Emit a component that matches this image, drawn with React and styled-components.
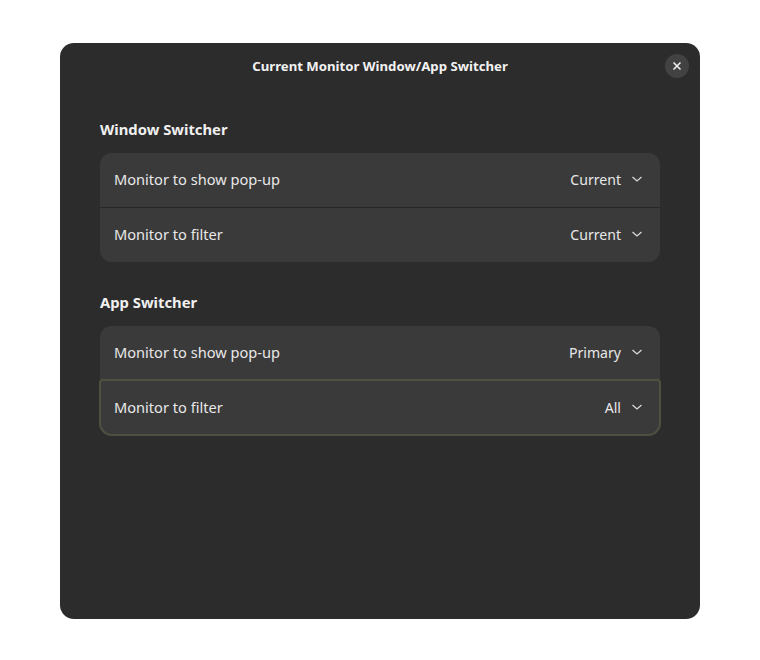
import React from "react";
import styled, { createGlobalStyle } from "styled-components";

const Global = createGlobalStyle`
  html, body { margin: 0; padding: 0; background: #ffffff; }
  body { font-family: "Noto Sans", "Open Sans", sans-serif; }
  * { box-sizing: border-box; }
`;

const Page = styled.div`
  width: 760px;
  height: 660px;
  padding: 43px 60px 0 60px;
`;

const Window = styled.div`
  width: 640px;
  height: 576px;
  background: #2c2c2c;
  border-radius: 14px;
  color: #ffffff;
  display: flex;
  flex-direction: column;
`;

const Header = styled.div`
  position: relative;
  height: 46px;
  padding-bottom: 1px;
  display: flex;
  align-items: center;
  justify-content: center;
`;

const Title = styled.div`
  font-size: 13.2px;
  font-weight: 700;
  color: #f2f2f2;
`;

const CloseButton = styled.button`
  position: absolute;
  right: 11px;
  top: 11px;
  width: 24px;
  height: 24px;
  border-radius: 50%;
  border: none;
  background: #424242;
  display: flex;
  align-items: center;
  justify-content: center;
  padding: 0;
`;

const Content = styled.div`
  padding: 30px 40px 0 40px;
  display: flex;
  flex-direction: column;
`;

const Group = styled.section`
  display: flex;
  flex-direction: column;
  & + & { margin-top: 30px; }
`;

const GroupTitle = styled.h2`
  margin: 0 0 14px 0;
  font-size: 14.8px;
  line-height: 20px;
  font-weight: 700;
  color: #f0f0f0;
`;

const Card = styled.div`
  background: #3a3a3a;
  border-radius: 12px;
  display: flex;
  flex-direction: column;
`;

const Row = styled.div`
  height: ${p => (p.$last ? 55 : 54)}px;
  display: flex;
  align-items: center;
  padding: 0 17px 2px 14px;
  background: #3a3a3a;
  border-top: ${p => (p.$first ? "none" : "1px solid #262626")};
  border-radius: ${p => (p.$first ? "12px 12px 0 0" : p.$last ? "0 0 12px 12px" : "0")};
  ${p => p.$focused && `
    outline: 2px solid #4f5140;
    outline-offset: -1px;
    border-top-color: transparent;
    border-radius: 3px 3px 12px 12px;
  `}
`;

const Label = styled.span`
  flex: 1;
  font-size: 14.6px;
  color: #e8e8e8;
`;

const Value = styled.span`
  font-size: 14.1px;
  color: #e8e8e8;
  margin-right: 10px;
`;

const Chevron = () => (
  <svg width="12" height="12" viewBox="0 0 12 12" fill="none">
    <path d="M1.5 4 L6 8 L10.5 4" stroke="#dcdcdc" strokeWidth="1.2" />
  </svg>
);

const CloseIcon = () => (
  <svg width="10" height="10" viewBox="0 0 10 10" fill="none">
    <path d="M1.5 1.5 L8.5 8.5 M8.5 1.5 L1.5 8.5" stroke="#f2f2f2" strokeWidth="1.5" />
  </svg>
);

const groups = [
  {
    title: "Window Switcher",
    rows: [
      { label: "Monitor to show pop-up", value: "Current" },
      { label: "Monitor to filter", value: "Current" },
    ],
  },
  {
    title: "App Switcher",
    rows: [
      { label: "Monitor to show pop-up", value: "Primary" },
      { label: "Monitor to filter", value: "All", focused: true },
    ],
  },
];

export default function App() {
  return (
    <>
      <Global />
      <Page>
        <Window>
          <Header>
            <Title>Current Monitor Window/App Switcher</Title>
            <CloseButton aria-label="Close"><CloseIcon /></CloseButton>
          </Header>
          <Content>
            {groups.map(g => (
              <Group key={g.title}>
                <GroupTitle>{g.title}</GroupTitle>
                <Card>
                  {g.rows.map((r, i) => (
                    <Row key={i} $first={i === 0} $last={i === g.rows.length - 1} $focused={r.focused}>
                      <Label>{r.label}</Label>
                      <Value>{r.value}</Value>
                      <Chevron />
                    </Row>
                  ))}
                </Card>
              </Group>
            ))}
          </Content>
        </Window>
      </Page>
    </>
  );
}
